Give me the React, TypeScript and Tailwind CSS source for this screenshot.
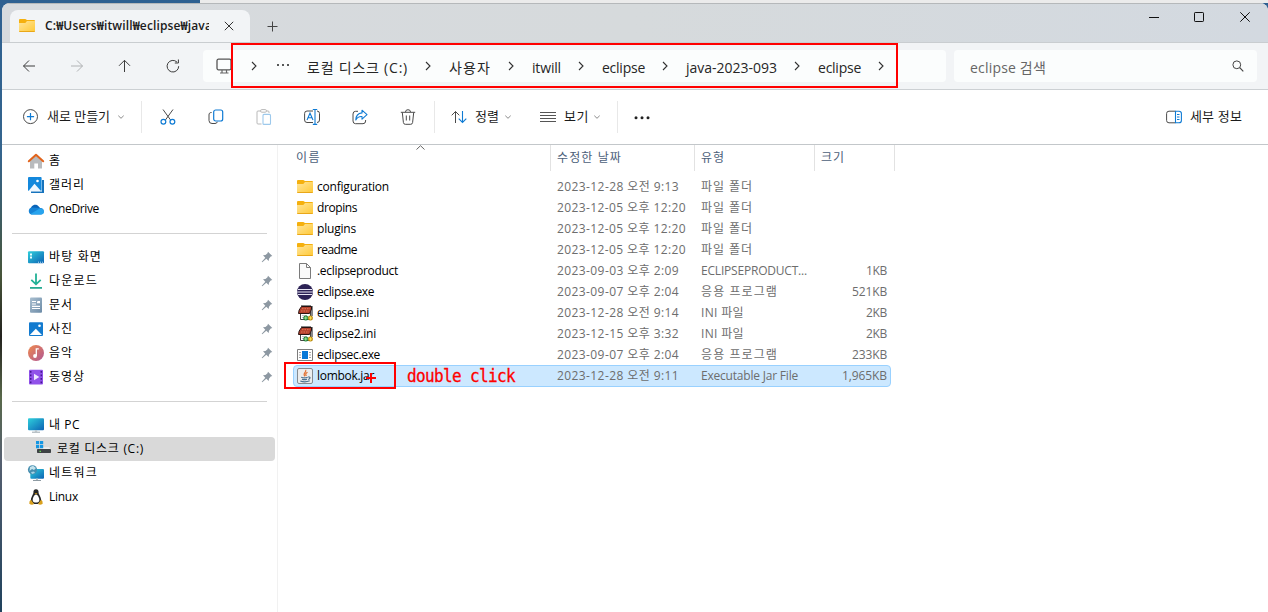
import { useLayoutEffect, useRef, type ReactNode } from "react";

/* Text set to a known advance width: the spacing is derived from the measured width. */
function Fit({ w, className = "", children }: { w: number; className?: string; children: string }) {
  const ref = useRef<HTMLSpanElement>(null);
  useLayoutEffect(() => {
    const el = ref.current;
    if (!el) return;
    el.style.letterSpacing = "0px";
    const natural = el.getBoundingClientRect().width;
    el.style.letterSpacing = `${(w - natural) / children.length}px`;
  }, [w, children]);
  return (
    <span ref={ref} className={`inline-block shrink-0 whitespace-pre ${className}`}>
      {children}
    </span>
  );
}

function Svg({ s = 16, className = "", children }: { s?: number; className?: string; children: ReactNode }) {
  return (
    <svg width={s} height={s} viewBox={`0 0 ${s} ${s}`} fill="none" className={`block shrink-0 overflow-visible ${className}`}>
      {children}
    </svg>
  );
}

const ink = "#4a4a4a";
const blue = "#0f7bd4";

const Folder = () => (
  <Svg>
    <defs>
      <linearGradient id="fold" x1="0" y1="0" x2="1" y2="1">
        <stop offset="0" stopColor="#ffe59b" />
        <stop offset="1" stopColor="#ffc936" />
      </linearGradient>
    </defs>
    <path d="M0 2Q0 1 1 1H6.3L8 2H15Q16 2 16 3V6H0Z" fill="#f5b00e" />
    <path d="M0 5H6.3L8 3H16V13Q16 14 15 14H1Q0 14 0 13Z" fill="url(#fold)" />
    <path d="M0.3 13.5H15.7" stroke="#e9a718" />
  </Svg>
);
const Doc = () => (
  <Svg>
    <path d="M2.5 .5H9.5L13.5 4.5V15.5H2.5Z" fill="#fafafa" stroke="#7b7b7b" />
    <path d="M9.5 .5V4.5H13.5" stroke="#7b7b7b" />
  </Svg>
);
const EclipseIcon = () => (
  <Svg>
    <circle cx="8" cy="8" r="8" fill="#2c2255" />
    <path d="M1 5.5H15M0 8H16M1 10.5H15" stroke="#e8e6f3" strokeWidth="1.1" />
  </Svg>
);
const Ini = () => (
  <Svg>
    <path d="M3.5 7H13.5V14.5H3.5Z" fill="#fff" stroke="#444" />
    <path d="M4.5 1.5H14.5V4L12.5 8.5H1.5Q1.3 5 4.5 1.5Z" fill="#b5402c" stroke="#2c1512" />
    <path d="M5 0V1.6M7 0V1.6M9 0V1.6M11 0V1.6M13 0V1.6M15 1V11" stroke="#111" />
    <path d="M5 3.7H13M4 6H12" stroke="#e0795a" strokeDasharray="1.5 1" />
    <path d="M5 10.5H10M5 12.5H7" stroke="#c4c4c4" />
    <circle cx="8.8" cy="13" r="2.5" fill="#1f7a38" />
    <circle cx="13.4" cy="13" r="2.5" fill="#b98a10" />
    <path d="M8.8 11.3V14.7M7.1 13H10.5" stroke="#a5ee9c" />
    <path d="M13.4 11.3V14.7M11.7 13H15.1" stroke="#ffe45c" />
  </Svg>
);
const Exe = () => (
  <Svg>
    <path d="M.5 2.5H15.5V13.5H.5Z" fill="#fff" stroke="#7c7c7c" />
    <path d="M5 4H11V12H5Z" fill="#0878d7" />
    <path d="M2 5.5H4M2 8H4M2 10.5H4M12 5.5H14M12 8H14M12 10.5H14" stroke="#8b8b8b" strokeWidth=".8" />
  </Svg>
);
const Jar = () => (
  <Svg>
    <rect x=".5" y=".5" width="15" height="15" rx="1.5" fill="#eceded" stroke="#858b90" />
    <path d="M8.6 1.8C10.2 4 5.2 5.2 7.8 8.3M10.5 4.3C8.3 5.5 8.3 6.5 9.4 8" stroke="#e37435" strokeWidth="1.2" />
    <path d="M4.2 9.3Q7.5 10.5 10.7 9.3M5 11.2Q7.5 12.2 10 11.2M3.3 13Q8 14.8 12.7 12.8M11.2 9C14 8.7 13.2 11 11.2 11.5" stroke="#4c718f" strokeWidth="1.2" />
  </Svg>
);

const Home = () => (
  <Svg>
    <path d="M2 7L8 1.5L14 7V15.5H10V10.5H6.3V15.5H2Z" fill="#b9bbbd" />
    <path d="M.8 8.3L8 1.7L15.2 8.3" stroke="#e2641c" strokeWidth="2" strokeLinejoin="round" strokeLinecap="round" />
  </Svg>
);
const Gallery = () => (
  <Svg>
    <path d="M3 3H16V16H3Z" fill="#1673bd" />
    <path d="M0 0H14V14.6H0Z" fill="#fff" />
    <rect width="13.6" height="14" rx="1" fill="#1488dc" />
    <path d="M.5 14L6.5 6.8L13 14Z" fill="#eef7ff" />
    <circle cx="9.5" cy="4" r="1.3" fill="#fff" />
  </Svg>
);
const OneDrive = () => (
  <Svg>
    <path d="M3 9C2 5 7 2 10.5 5.2L13 8L8 11Z" fill="#0a64b8" />
    <path d="M3.5 13.5A3.5 3.5 0 0 1 4 6.6L12 7A3.2 3.2 0 0 1 13 13.5Z" fill="#1583d6" />
    <path d="M2.5 13L10 8.5C12 6.5 16 7.8 16 10.7C16 12.3 14.8 13.5 13.3 13.5H4Q3 13.5 2.5 13Z" fill="#28a4ee" />
  </Svg>
);
const Desktop = () => (
  <Svg>
    <defs>
      <linearGradient id="desk" x1="0" y1="0" x2="1" y2="1">
        <stop offset="0" stopColor="#2fd0dc" />
        <stop offset="1" stopColor="#0c62b4" />
      </linearGradient>
    </defs>
    <rect y="2.2" width="16" height="12" rx="1" fill="url(#desk)" />
    <path d="M2 4.5H4V6.5H2ZM2 7.5H4V9.5H2Z" fill="#e7ffff" />
    <path d="M10 13.2H15" stroke="#bde4f8" strokeDasharray="1 1" />
  </Svg>
);
const Download = () => (
  <Svg>
    <path d="M8 .5V11M3.3 6.8L8 11.3L12.7 6.8" stroke="#22b196" strokeWidth="1.8" />
    <path d="M2 14.9H14" stroke="#1ba68c" strokeWidth="1.7" />
  </Svg>
);
const Docs = () => (
  <Svg>
    <defs>
      <linearGradient id="docs" x1="0" y1="0" x2="1" y2="1">
        <stop offset="0" stopColor="#a9bfd0" />
        <stop offset="1" stopColor="#6c8ba7" />
      </linearGradient>
    </defs>
    <rect x="2" y=".4" width="12" height="15.4" rx="1" fill="url(#docs)" />
    <path d="M4 4.5H8M4 7H8M4 9.3H12M4 11.5H12M9 5.7H12" stroke="#fff" strokeWidth="1.2" />
    <path d="M9.3 5H12" stroke="#fff" strokeWidth="2" />
  </Svg>
);
const Pictures = () => (
  <Svg>
    <rect x="1" y="1.2" width="14" height="13.8" rx="1" fill="#137bcf" />
    <path d="M1.8 14L7.8 7.8L14 14Z" fill="#fff" />
    <circle cx="11.5" cy="4.7" r="1.3" fill="#fff" />
  </Svg>
);
const Music = () => (
  <Svg>
    <defs>
      <linearGradient id="mus" x1="0" y1="0" x2="1" y2="1">
        <stop offset="0" stopColor="#ef8a4d" />
        <stop offset="1" stopColor="#b05694" />
      </linearGradient>
    </defs>
    <circle cx="8" cy="8" r="8" fill="url(#mus)" />
    <circle cx="7" cy="11" r="1.9" fill="#fff" />
    <path d="M8.3 11V3.8H10.8" stroke="#fff" strokeWidth="1.3" />
  </Svg>
);
const Video = () => (
  <Svg>
    <rect x="1" y=".7" width="14" height="14.8" rx="1" fill="#9152ea" />
    <path d="M2.7 2V15M13.3 2V15" stroke="#461691" strokeWidth="1.5" strokeDasharray="1.7 1.8" />
    <path d="M6 4.7L11.3 8L6 11.3Z" fill="#eee6ff" />
  </Svg>
);
const Pc = () => (
  <Svg>
    <rect y="1.2" width="16" height="12" rx="1" fill="url(#desk)" />
    <path d="M4 15.2H12" stroke="#9ba7ae" strokeWidth="1" />
    <path d="M6.8 13.2H9.2V15H6.8Z" fill="#bdc6cb" />
  </Svg>
);
const Disk = () => (
  <Svg>
    <path d="M3 9L5 6.2H13L15 9Z" fill="#ececec" />
    <path d="M0 0H3.2V3.2H0ZM4 0H7.2V3.2H4ZM0 4H3.2V7.2H0ZM4 4H7.2V7.2H4Z" fill="#1496e3" />
    <rect x="1" y="8" width="14" height="4" rx=".7" fill="#3e4245" />
    <path d="M3.5 10.3H5" stroke="#65dc55" strokeWidth="1.2" />
  </Svg>
);
const Network = () => (
  <Svg>
    <rect x="2.3" y="4" width="13.7" height="9.8" rx="1" fill="url(#desk)" />
    <path d="M5 15.5H13" stroke="#8e9ba3" />
    <path d="M8 13.5H10V15H8Z" fill="#b4bfc5" />
    <circle cx="4.5" cy="4.8" r="4.6" fill="#468eaf" />
    <path d="M2 2L5 .8L8 3L6 5L4 4L1.5 6Z" fill="#c2e2ec" />
    <path d="M3 7L6 6.5L7 8L4 9Z" fill="#a8d3e3" />
  </Svg>
);
const Tux = () => (
  <Svg>
    <path d="M8 .3C10 .3 10.8 1.8 10.6 4C11 6 13.5 8.5 13.2 12.2L10 15H6L2.8 12.2C2.5 8.5 5 6 5.4 4C5.2 1.8 6 .3 8 .3Z" fill="#262626" />
    <path d="M8 5.5C10 5.8 11.8 9.5 11.2 12C10.5 14 5.5 14 4.8 12C4.2 9.5 6 5.8 8 5.5Z" fill="#fff" />
    <path d="M6.5 4.2H9.5L8 5.5Z" fill="#e7a814" />
    <path d="M3 10.8L6 15Q4 16.5 1.3 14.8Q1 12 3 10.8ZM13 10.8L10 15Q12 16.5 14.7 14.8Q15 12 13 10.8Z" fill="#d9a01c" />
  </Svg>
);
const Pin = () => (
  <Svg s={12}>
    <path d="M7 .7L11.3 5L9.7 5.5L8 7.7L7.7 10L5.3 7.7L1.3 11.3L.7 10.7L4.3 6.7L2 4.3L4.5 4L6.5 2.3Z" fill="#8d98a2" />
  </Svg>
);

const ChevronRight = () => (
  <Svg s={10}>
    <path d="M3 1L7 5L3 9" stroke="#333" strokeWidth="1.1" />
  </Svg>
);
const ChevronDown = () => (
  <Svg s={8}>
    <path d="M1.3 2.7L4 5.3L6.7 2.7" stroke="#8a8a8a" />
  </Svg>
);

type Place = { name: string; w: number; icon: ReactNode; pin?: boolean; selected?: boolean };

const places: Place[][] = [
  [
    { name: "홈", w: 12, icon: <Home /> },
    { name: "갤러리", w: 36, icon: <Gallery /> },
    { name: "OneDrive", w: 50, icon: <OneDrive /> },
  ],
  [
    { name: "바탕 화면", w: 53, icon: <Desktop />, pin: true },
    { name: "다운로드", w: 49, icon: <Download />, pin: true },
    { name: "문서", w: 24, icon: <Docs />, pin: true },
    { name: "사진", w: 24, icon: <Pictures />, pin: true },
    { name: "음악", w: 24, icon: <Music />, pin: true },
    { name: "동영상", w: 36, icon: <Video />, pin: true },
  ],
  [
    { name: "내 PC", w: 31, icon: <Pc /> },
    { name: "로컬 디스크 (C:)", w: 87, icon: <Disk />, selected: true },
    { name: "네트워크", w: 49, icon: <Network /> },
    { name: "Linux", w: 29, icon: <Tux /> },
  ],
];

type Row = { name: string; nw: number; icon: ReactNode; date: string; type: string; tw: number; size?: string; sw?: number };

const rows: Row[] = [
  { name: "configuration", nw: 72, icon: <Folder />, date: "2023-12-28 오전 9:13", type: "파일 폴더", tw: 52 },
  { name: "dropins", nw: 40, icon: <Folder />, date: "2023-12-05 오후 12:20", type: "파일 폴더", tw: 52 },
  { name: "plugins", nw: 39, icon: <Folder />, date: "2023-12-05 오후 12:20", type: "파일 폴더", tw: 52 },
  { name: "readme", nw: 40, icon: <Folder />, date: "2023-12-05 오후 12:20", type: "파일 폴더", tw: 52 },
  { name: ".eclipseproduct", nw: 81, icon: <Doc />, date: "2023-09-03 오후 2:09", type: "ECLIPSEPRODUCT...", tw: 106, size: "1KB", sw: 21 },
  { name: "eclipse.exe", nw: 57, icon: <EclipseIcon />, date: "2023-09-07 오후 2:04", type: "응용 프로그램", tw: 77, size: "521KB", sw: 35 },
  { name: "eclipse.ini", nw: 52, icon: <Ini />, date: "2023-12-28 오전 9:14", type: "INI 파일", tw: 43, size: "2KB", sw: 21 },
  { name: "eclipse2.ini", nw: 59, icon: <Ini />, date: "2023-12-15 오후 3:32", type: "INI 파일", tw: 43, size: "2KB", sw: 21 },
  { name: "eclipsec.exe", nw: 63, icon: <Exe />, date: "2023-09-07 오후 2:04", type: "응용 프로그램", tw: 77, size: "233KB", sw: 35 },
  { name: "lombok.jar", nw: 57, icon: <Jar />, date: "2023-12-28 오전 9:11", type: "Executable Jar File", tw: 97, size: "1,965KB", sw: 45 },
];

const crumbs = [
  { name: "로컬 디스크 (C:)", w: 101 },
  { name: "사용자", w: 42 },
  { name: "itwill", w: 29 },
  { name: "eclipse", w: 43 },
  { name: "java-2023-093", w: 91 },
  { name: "eclipse", w: 43 },
];

function TitleBar() {
  return (
    <div className="flex h-[39px] shrink-0 border-t border-[#b5b8ba] bg-gradient-to-r from-[#d7dade] via-[#d6dadc] to-[#d3d9e0] pl-2">
      <div className="mt-[6px] flex h-8 w-60 items-center rounded-t-lg bg-[#f2f4f6] pl-[9px]">
        <Folder />
        <div className="ml-[10px] w-[164px] overflow-hidden text-xs font-semibold text-[#1b1b1b]">
          <Fit w={167}>C:₩Users₩itwill₩eclipse₩java</Fit>
        </div>
        <Svg s={10} className="ml-[15px]">
          <path d="M.8 .8L9.2 9.2M9.2 .8L.8 9.2" stroke="#333" />
        </Svg>
      </div>
      <Svg s={12} className="ml-[17px] mt-[17px]">
        <path d="M5.5 .5V10.5M.5 5.5H10.5" stroke="#444" />
      </Svg>
      <div className="ml-auto mr-[18px] mt-2 flex gap-9">
        <Svg s={10}>
          <path d="M1 5.5H11" stroke="#111" />
        </Svg>
        <Svg s={10}>
          <rect x=".5" y=".5" width="9" height="9" rx=".7" stroke="#111" />
        </Svg>
        <Svg s={10}>
          <path d="M.3 .3L9.7 9.7M9.7 .3L.3 9.7" stroke="#111" />
        </Svg>
      </div>
    </div>
  );
}

function NavBar() {
  return (
    <div className="flex h-12 shrink-0 items-center border-y border-b-[#ccd0d3] border-t-[#c9cdd0] bg-[#f2f4f6] pl-5">
      <div className="flex w-[181px] gap-8">
        <Svg>
          <path d="M13 8H1.5M7 2.5L1.5 8L7 13.5" stroke="#3c3c3c" />
        </Svg>
        <Svg>
          <path d="M1 8H12.5M7 2.5L12.5 8L7 13.5" stroke="#b0b2b4" />
        </Svg>
        <Svg>
          <path d="M6.5 14V2.3M1 7.8L6.5 2.3L12 7.8" stroke="#3c3c3c" />
        </Svg>
        <Svg>
          <path d="M12.7 8.2A5.8 5.8 0 1 1 11 4.1M12.4 1.5V5H8.8" stroke="#3c3c3c" />
        </Svg>
      </div>
      <div className="flex h-8 w-[743px] items-center rounded bg-[#fbfdfd] pl-[13px] text-[#262626]">
        <Svg>
          <rect x="1" y="1.2" width="14" height="10.6" rx="1.5" stroke="#555" strokeWidth="1.3" />
          <path d="M4 15H12.5M6 12V14.5M10.5 12V14.5" stroke="#666" strokeWidth="1.2" />
        </Svg>
        <div className="ml-[17px]">
          <ChevronRight />
        </div>
        <Svg s={12} className="ml-[18px]">
          <path d="M0 5H2M5 5H7M10 5H12" stroke="#222" strokeWidth="1.6" />
        </Svg>
        <div className="ml-[18px] flex items-center">
          {crumbs.map((c, i) => (
            <div key={i} className="flex items-center">
              <Fit w={c.w} className="pt-0.5 text-[14px]">
                {c.name}
              </Fit>
              <div className="flex w-[41px] justify-center pr-px">
                <ChevronRight />
              </div>
            </div>
          ))}
        </div>
      </div>
      <div className="ml-2 flex h-8 w-[303px] items-center rounded bg-[#fbfdfd] pl-4">
        <Fit w={76} className="pt-0.5 text-[14px] text-[#666]">
          eclipse 검색
        </Fit>
        <Svg s={12} className="ml-auto mr-[13px]">
          <circle cx="4.8" cy="4.8" r="3.9" stroke="#444" />
          <path d="M7.7 7.7L11.3 11.3" stroke="#444" strokeWidth="1.2" />
        </Svg>
      </div>
    </div>
  );
}

const Divider = () => <div className="h-8 w-px bg-[#e8e8e8]" />;

function Toolbar() {
  return (
    <div className="flex h-[55px] shrink-0 items-center border-b border-[#c3c7ca] bg-white pl-[21px] text-[13px] text-[#1c1c1c]">
      <Svg>
        <circle cx="7.5" cy="7.6" r="7" stroke={ink} />
        <path d="M7.5 4V11.2M3.9 7.6H11.1" stroke={blue} strokeWidth="1.2" />
      </Svg>
      <Fit w={63} className="ml-2">
        새로 만들기
      </Fit>
      <div className="ml-[7px] mr-4">
        <ChevronDown />
      </div>
      <Divider />
      <div className="mx-[18px] flex gap-8">
        <Svg>
          <path d="M3 .5L10.6 11M13 .5L5.4 11" stroke={ink} />
          <circle cx="3.4" cy="12.8" r="2.4" stroke={blue} strokeWidth="1.2" />
          <circle cx="12.4" cy="12.8" r="2.4" stroke={blue} strokeWidth="1.2" />
        </Svg>
        <Svg>
          <path d="M3.6 3.5C1.5 3.5 1 4.5 1 6V11.5Q1 14.5 4 14.5H7Q9 14.5 9.3 12.8" stroke={ink} />
          <rect x="5.7" y="1" width="9" height="11" rx="2" stroke={blue} strokeWidth="1.2" />
        </Svg>
        <Svg>
          <path d="M4.5 2H2Q1 2 1 3V14Q1 15 2 15H5.5M10.5 2H12Q13 2 13 3V4" stroke="#b9b9b9" />
          <rect x="4.5" y=".6" width="6" height="2.6" rx="1.3" stroke="#b9b9b9" />
          <rect x="7" y="5.4" width="7.5" height="10" rx="1" stroke="#9dc9ec" strokeWidth="1.1" />
        </Svg>
        <Svg>
          <path d="M9 2H3Q.6 2 .6 4.5V11Q.6 13.5 3 13.5H9M13 2Q15.5 2 15.5 4.5V11Q15.5 13.5 13 13.5" stroke={ink} />
          <path d="M3 11L6 4.2L9 11M4 8.8H8M11 .5V15.4M8.8 .5H13.2M8.8 15.4H13.2" stroke={blue} strokeWidth="1.1" />
        </Svg>
        <Svg>
          <path d="M6 2.3H3.5Q1 2.3 1 5V12Q1 14.7 3.5 14.7H11Q13.6 14.7 13.6 12V11" stroke={ink} />
          <path d="M10 1.2L15 5.7L10 10.2V7.6Q6 7.2 3.8 11Q4 4.5 10 3.9Z" stroke={blue} strokeWidth="1.1" strokeLinejoin="round" />
        </Svg>
        <Svg>
          <path d="M.8 3.3H15.2M5.5 3Q5.5 .7 8 .7Q10.5 .7 10.5 3M2.3 3.5L3.4 13.5Q3.6 15.3 5.3 15.3H10.7Q12.4 15.3 12.6 13.5L13.7 3.5M6.3 6.5V11.5M9.7 6.5V11.5" stroke={ink} />
        </Svg>
      </div>
      <Divider />
      <Svg className="ml-4">
        <path d="M4.5 14V2.5M.7 6.3L4.5 2.5L8.3 6.3" stroke={ink} />
        <path d="M11.5 2V13.5M7.7 9.7L11.5 13.5L15.3 9.7" stroke={blue} strokeWidth="1.1" />
      </Svg>
      <Fit w={24} className="ml-2">
        정렬
      </Fit>
      <div className="ml-[5px] mr-7">
        <ChevronDown />
      </div>
      <Svg>
        <path d="M0 3.5H16M0 6.5H16M0 9.5H16M0 12.5H16" stroke="#555" />
      </Svg>
      <Fit w={25} className="ml-2">
        보기
      </Fit>
      <div className="ml-1 mr-4">
        <ChevronDown />
      </div>
      <Divider />
      <Svg className="ml-4">
        <circle cx="2" cy="8.8" r="1.5" fill="#222" />
        <circle cx="8" cy="8.8" r="1.5" fill="#222" />
        <circle cx="14" cy="8.8" r="1.5" fill="#222" />
      </Svg>
      <div className="ml-auto mr-[26px] flex items-center gap-2">
        <Svg>
          <path d="M9.5 2.2H3Q.6 2.2 .6 4.5V11.5Q.6 13.8 3 13.8H9.5" stroke={ink} />
          <path d="M9.5 2.2H13Q15.4 2.2 15.4 4.5V11.5Q15.4 13.8 13 13.8H9.5ZM11 5.5H13.5M11 8H13.5M11 10.5H13.5" stroke={blue} strokeWidth="1.1" />
        </Svg>
        <Fit w={52}>세부 정보</Fit>
      </div>
    </div>
  );
}

function Sidebar() {
  return (
    <nav className="w-[276px] shrink-0 border-r border-[#f1f1f1] pt-1 text-xs text-black">
      {places.map((group, g) => (
        <div key={g}>
          {g > 0 && (
            <div className="h-6 pl-[10px] pt-3">
              <div className="h-px w-[255px] bg-[#d3d3d3]" />
            </div>
          )}
          {group.map((p) => (
            <div
              key={p.name}
              className={`ml-[2px] flex h-6 w-[271px] items-center rounded-sm ${
                p.selected ? "bg-[#d9d9d9] pl-8" : "pl-6"
              }`}
            >
              {p.icon}
              <Fit w={p.w} className="ml-[5px]">
                {p.name}
              </Fit>
              {p.pin && (
                <div className="ml-auto mr-[2px]">
                  <Pin />
                </div>
              )}
            </div>
          ))}
        </div>
      ))}
    </nav>
  );
}

function FileList() {
  return (
    <main className="relative flex-1 pl-[15px] text-xs">
      <div className="flex h-[26px] text-[#4c607a]">
        <div className="w-[258px] border-r border-[#e2e2e2] pl-[3px] pt-[5px]">
          <Fit w={25}>이름</Fit>
        </div>
        <div className="w-36 border-r border-[#e2e2e2] pl-[6px] pt-[5px]">
          <Fit w={65}>수정한 날짜</Fit>
        </div>
        <div className="w-[120px] border-r border-[#e2e2e2] pl-[6px] pt-[5px]">
          <Fit w={24}>유형</Fit>
        </div>
        <div className="w-20 border-r border-[#e2e2e2] pl-[6px] pt-[5px]">
          <Fit w={24}>크기</Fit>
        </div>
      </div>
      <Svg s={10} className="absolute left-[138px] top-0">
        <path d="M.5 4.5L4.5 .7L8.5 4.5" stroke="#666" />
      </Svg>
      <div className="pt-[5px]">
        {rows.map((r) => {
          const selected = r.name === "lombok.jar";
          return (
            <div
              key={r.name}
              className={`flex w-[598px] items-center border px-[3px] ${
                selected ? "h-[22px] rounded-sm border-[#99d1ff] bg-[#cce8ff]" : "h-[21px] border-transparent"
              }`}
            >
              <div className="flex w-[260px] items-center gap-1 text-black">
                {r.icon}
                <Fit w={r.nw}>{r.name}</Fit>
              </div>
              <div className="w-36 text-[#6d6d6d]">
                <Fit w={r.date.endsWith("12:20") ? 129 : 122}>{r.date}</Fit>
              </div>
              <div className="w-[110px] text-[#6d6d6d]">
                <Fit w={r.tw}>{r.type}</Fit>
              </div>
              <div className="flex flex-1 justify-end text-[#6d6d6d]">{r.size && <Fit w={r.sw ?? 0}>{r.size}</Fit>}</div>
            </div>
          );
        })}
      </div>
      <div className="absolute left-[6px] top-[217px] h-[27px] w-28 border-2 border-[#f00]" />
      <Svg s={10} className="absolute left-[88px] top-[228px]">
        <path d="M5 0V10M0 5H10" stroke="#f00" strokeWidth="2" />
      </Svg>
      <div className="absolute left-[129px] top-[220px] origin-center scale-y-110 font-['DejaVu_Sans_Mono',monospace] text-base leading-6 text-[#f00] [-webkit-text-stroke:0.3px_#f00]">
        <Fit w={108}>double click</Fit>
      </div>
    </main>
  );
}

export default function App() {
  return (
    <div className="relative h-[612px] w-[1268px] overflow-hidden bg-[linear-gradient(#2e6091_0,#35658e_25%,#47553a_45%,#23221e_55%,#59694b_65%,#566070_75%,#20425d_100%)] pl-[2px] font-['Open_Sans','Noto_Sans_CJK_KR',sans-serif]">
      <div className="flex h-[3px] justify-end">
        <div className="w-[1068px] bg-[#ebebeb]" />
      </div>
      <div className="flex h-[609px] flex-col overflow-hidden rounded-t-lg bg-white">
        <TitleBar />
        <NavBar />
        <Toolbar />
        <div className="flex flex-1">
          <Sidebar />
          <FileList />
        </div>
      </div>
      <div className="absolute left-[231px] top-[43px] h-[45px] w-[667px] border-2 border-[#f00]" />
    </div>
  );
}
